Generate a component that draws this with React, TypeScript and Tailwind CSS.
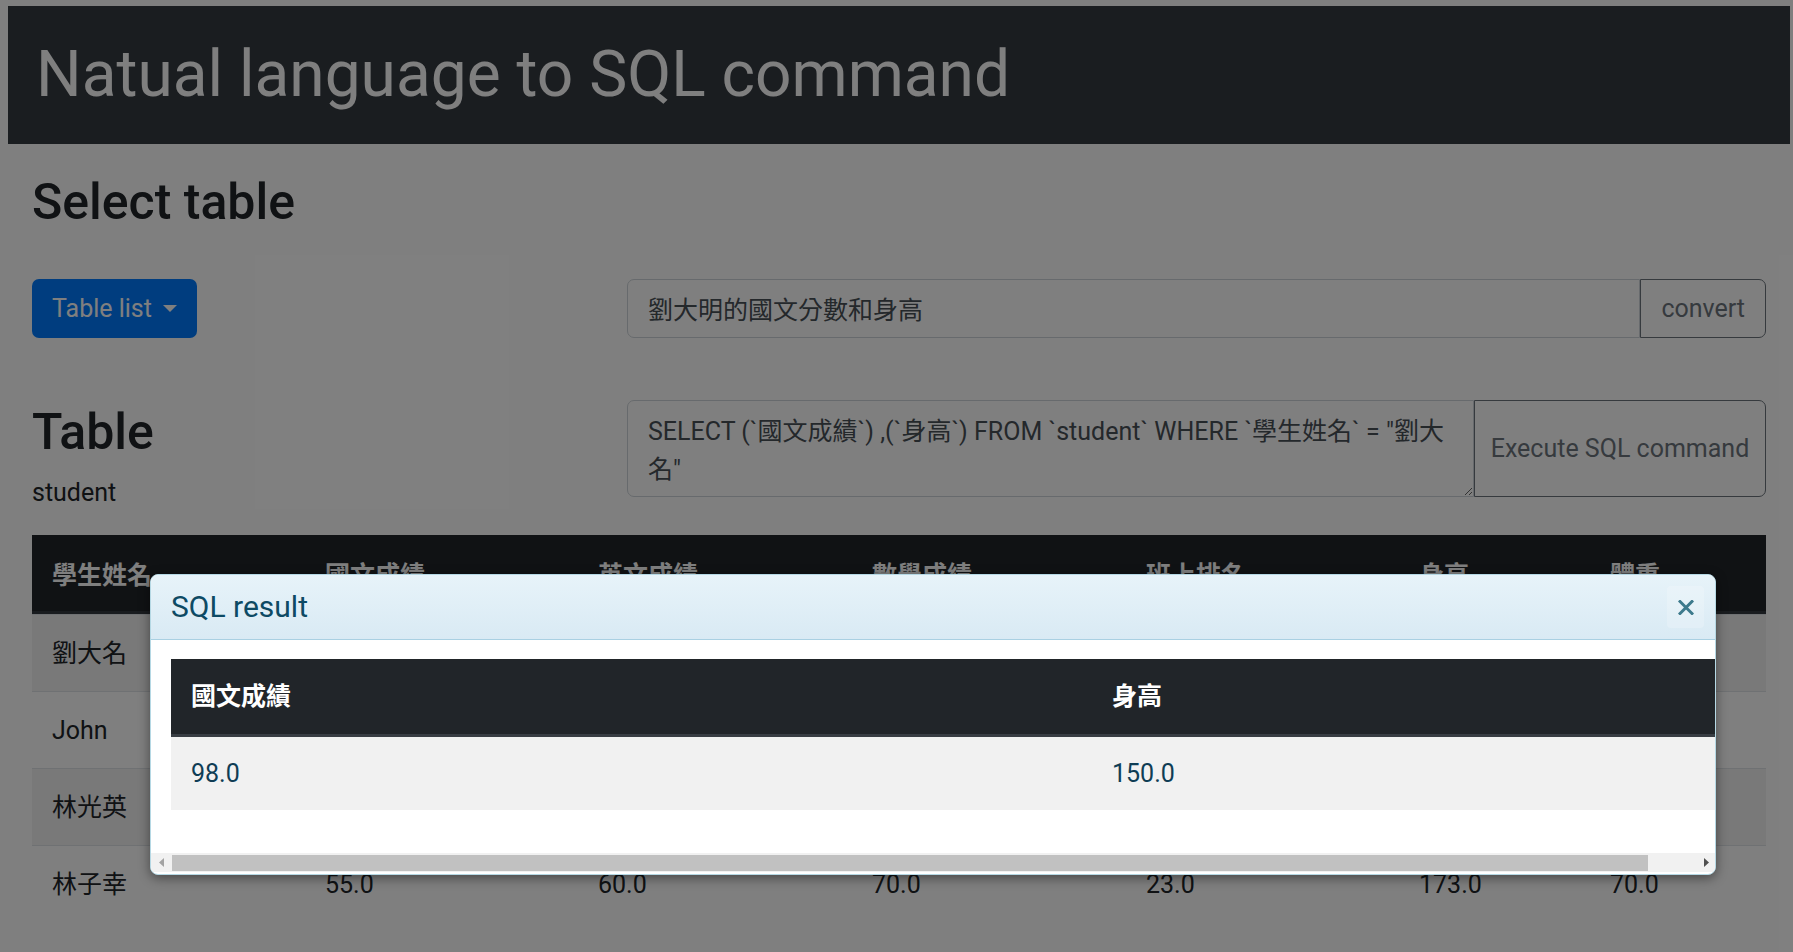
import React from 'react';

const COLS = "grid grid-cols-[273px_273px_274px_274px_273px_191px_176px]";

const HEAD = ["學生姓名", "國文成績", "英文成績", "數學成績", "班上排名", "身高", "體重"];

const ROWS = [
    ["劉大名", "98.0", "85.0", "90.0", "1.0", "150.0", "45.0"],
    ["John", "70.0", "95.0", "80.0", "10.0", "180.0", "75.0"],
    ["林光英", "88.0", "76.0", "92.0", "5.0", "160.0", "50.0"],
    ["林子幸", "55.0", "60.0", "70.0", "23.0", "173.0", "70.0"],
];

const SQL_LINE1 = 'SELECT (`國文成績`) ,(`身高`) FROM `student` WHERE `學生姓名` = "劉大';
const SQL_LINE2 = '名"';

function StudentTable() {
    return (
        <div className="mt-[26px] w-[1734px] text-[25px] leading-[37px] text-[#212529]">
            {/* thead */}
            <div className={`${COLS} h-[79px] pt-[4px] items-center bg-[#212529] border-b-[3px] border-[#32383e] text-white font-bold`}>
                {HEAD.map((h) => (
                    <div key={h} className="px-[20px]">{h}</div>
                ))}
            </div>
            {ROWS.map((row, i) => (
                <div key={i} className={`${COLS} h-[77px] items-center border-t border-[#dee2e6] ${i % 2 === 0 ? 'bg-[#f2f2f2]' : 'bg-white'}`}>
                    {row.map((c, j) => (
                        <div key={j} className="px-[20px]">{c}</div>
                    ))}
                </div>
            ))}
        </div>
    );
}

function ResultModal() {
    return (
        <div className="absolute left-[150px] top-[574px] w-[1566px] h-[301px] rounded-[8px] border border-[#b5d8e4] bg-white overflow-hidden shadow-[0_3px_12px_rgba(0,0,0,0.45)] flex flex-col">
            {/* modal header */}
            <div className="h-[65px] shrink-0 flex items-center justify-between pl-[20px] pr-[11px] bg-gradient-to-b from-[#e7f3f9] to-[#d9eaf4] border-b border-[#a9d0e2]">
                <h5 className="text-[30px] leading-none text-[#0d4a64]">SQL result</h5>
                <button className="w-[37px] h-[42px] flex items-center justify-center rounded-[4px] bg-white/20">
                    <svg width="16" height="15" viewBox="0 0 16 15">
                        <path d="M2 1.5 L14 13.5 M14 1.5 L2 13.5" stroke="#3d7a8c" strokeWidth="3" strokeLinecap="square" />
                    </svg>
                </button>
            </div>

            {/* modal body, scrolled horizontally */}
            <div className="flex-1 flex flex-col">
                <div className="pt-[19px] pl-[20px] overflow-hidden">
                    <div className="w-[1600px] text-[25px] leading-[37px]">
                        <div className="grid grid-cols-[921px_679px] h-[78px] items-center bg-[#212529] border-b-[3px] border-[#383d43] text-white font-bold">
                            <div className="px-[20px]">國文成績</div>
                            <div className="px-[20px]">身高</div>
                        </div>
                        <div className="grid grid-cols-[921px_679px] h-[73px] items-center bg-[#f1f1f1] text-[#0f3d55]">
                            <div className="px-[20px]">98.0</div>
                            <div className="px-[20px]">150.0</div>
                        </div>
                    </div>
                </div>
                <div className="flex-1" />
                {/* horizontal scrollbar */}
                <div className="h-[19px] mb-[2px] bg-[#f1f1f1] flex items-center">
                    <div className="w-[21px] h-full flex items-center justify-center">
                        <svg width="5" height="9" viewBox="0 0 5 9"><path d="M5 0 L0 4.5 L5 9 Z" fill="#a3a3a3" /></svg>
                    </div>
                    <div className="w-[1476px] h-[16px] bg-[#c1c1c1]" />
                    <div className="flex-1" />
                    <div className="w-[18px] h-full flex items-center justify-center">
                        <svg width="5" height="9" viewBox="0 0 5 9"><path d="M0 0 L5 4.5 L0 9 Z" fill="#505050" /></svg>
                    </div>
                </div>
            </div>
        </div>
    );
}

export default function App() {
    return (
        <div className="relative w-[1793px] h-[952px] overflow-hidden bg-white font-[Roboto,'Noto_Sans_CJK_TC',sans-serif] text-[#212529]">
            {/* Jumbotron header */}
            <div className="mt-[6px] ml-[8px] w-[1782px] h-[138px] bg-[#343a40] pt-[31px] pl-[28px]">
                <h1 className="text-[64px] leading-[1.2] text-white">Natual language to SQL command</h1>
            </div>

            <div className="pl-[32px] w-[1766px]">
                <h1 className="mt-[28px] text-[50px] leading-[60px] font-medium">Select table</h1>

                {/* dropdown + natural language input */}
                <div className="mt-[47px] flex h-[59px]">
                    <div className="w-[595px]">
                        <button className="h-[59px] px-[20px] flex items-center rounded-[7px] bg-[#007bff] text-white text-[25px]">
                            Table list
                            <span className="ml-[11px] w-0 h-0 border-x-[7.5px] border-x-transparent border-t-[7.5px] border-t-white" />
                        </button>
                    </div>
                    <div className="flex-1 flex">
                        <input
                            readOnly
                            value="劉大明的國文分數和身高"
                            className="flex-1 h-[59px] px-[20px] pb-[2px] border border-[#ced4da] rounded-l-[7px] text-[25px] text-[#495057] bg-white outline-none"
                        />
                        <button className="h-[59px] px-[20px] border border-[#6c757d] rounded-r-[7px] text-[25px] text-[#6c757d]">convert</button>
                    </div>
                </div>

                {/* table title + SQL command */}
                <div className="mt-[62px] flex">
                    <div className="w-[595px]">
                        <h1 className="mt-[2px] text-[50px] leading-[60px] font-medium">Table</h1>
                        <p className="mt-[14px] text-[25px] leading-[33px]">student</p>
                    </div>
                    <div className="flex-1 flex h-[97px]">
                        <textarea
                            readOnly
                            wrap="off"
                            value={SQL_LINE1 + "\n" + SQL_LINE2}
                            className="flex-1 h-[97px] px-[20px] pt-[12px] pb-[8px] border border-[#ced4da] rounded-l-[7px] text-[25px] leading-[37.5px] text-[#495057] bg-white overflow-hidden whitespace-pre outline-none"
                        />
                        <button className="w-[292px] h-[97px] border border-[#6c757d] rounded-r-[7px] text-[25px] text-[#6c757d]">Execute SQL command</button>
                    </div>
                </div>

                <StudentTable />
            </div>

            {/* modal backdrop */}
            <div className="absolute inset-0 bg-black/50" />
            <ResultModal />
        </div>
    );
}
